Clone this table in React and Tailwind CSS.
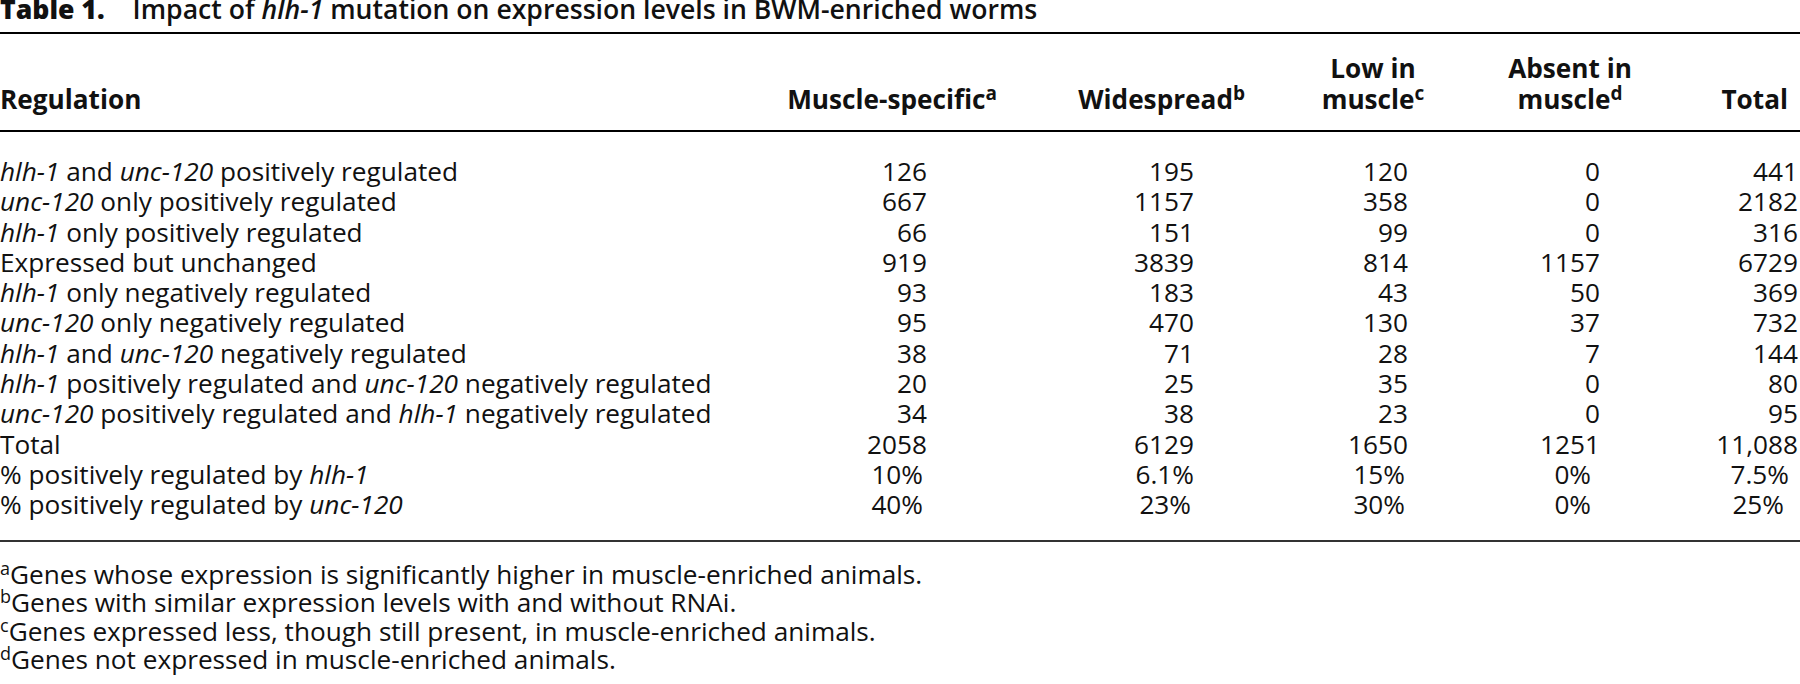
import React from 'react';

const grid = 'grid grid-cols-[760px_250px_260px_200px_200px_130px]';

// right padding per numeric column (integers)
const padInt = ['pr-[83px]', 'pr-[76px]', 'pr-[62px]', 'pr-[70px]', 'pr-[2px]'];
// percent rows sit a little left of the integers
const padPct = [
  ['pr-[87px]', 'pr-[76px]', 'pr-[65px]', 'pr-[79px]', 'pr-[11px]'],
  ['pr-[87px]', 'pr-[79px]', 'pr-[65px]', 'pr-[79px]', 'pr-[16px]'],
];

const rows = [
  { label: <><i>hlh-1</i> and <i>unc-120</i> positively regulated</>, vals: ['126', '195', '120', '0', '441'] },
  { label: <><i>unc-120</i> only positively regulated</>, vals: ['667', '1157', '358', '0', '2182'] },
  { label: <><i>hlh-1</i> only positively regulated</>, vals: ['66', '151', '99', '0', '316'] },
  { label: <>Expressed but unchanged</>, vals: ['919', '3839', '814', '1157', '6729'] },
  { label: <><i>hlh-1</i> only negatively regulated</>, vals: ['93', '183', '43', '50', '369'] },
  { label: <><i>unc-120</i> only negatively regulated</>, vals: ['95', '470', '130', '37', '732'] },
  { label: <><i>hlh-1</i> and <i>unc-120</i> negatively regulated</>, vals: ['38', '71', '28', '7', '144'] },
  { label: <><i>hlh-1</i> positively regulated and <i>unc-120</i> negatively regulated</>, vals: ['20', '25', '35', '0', '80'] },
  { label: <><i>unc-120</i> positively regulated and <i>hlh-1</i> negatively regulated</>, vals: ['34', '38', '23', '0', '95'] },
  { label: <>Total</>, vals: ['2058', '6129', '1650', '1251', '11,088'] },
];

const pctRows = [
  { label: <>% positively regulated by <i>hlh-1</i></>, vals: ['10%', '6.1%', '15%', '0%', '7.5%'] },
  { label: <>% positively regulated by <i>unc-120</i></>, vals: ['40%', '23%', '30%', '0%', '25%'] },
];

const notes = [
  ['a', 'Genes whose expression is significantly higher in muscle-enriched animals.'],
  ['b', 'Genes with similar expression levels with and without RNAi.'],
  ['c', 'Genes expressed less, though still present, in muscle-enriched animals.'],
  ['d', 'Genes not expressed in muscle-enriched animals.'],
];

const Sup = ({ children }) => <sup className="text-[19px]">{children}</sup>;

export default function App() {
  return (
    <div className="w-[1800px] h-[684px] overflow-hidden bg-white text-[#111] font-['Open_Sans',sans-serif] text-[26.2px]">
      {/* title */}
      <div className="leading-[19px] pb-[13px] border-b-2 border-black whitespace-nowrap text-[26.6px]">
        <span className="font-extrabold">Table 1.</span>
        <span className="font-semibold ml-[28px]">
          Impact of <i>hlh-1</i> mutation on expression levels in BWM-enriched worms
        </span>
      </div>

      {/* header */}
      <div className={`${grid} items-end font-bold leading-[31px] pt-[19px] pb-[15px] border-b-2 border-black`}>
        <div>Regulation</div>
        <div className="text-right pr-[13px]">Muscle-specific<Sup>a</Sup></div>
        <div className="text-right pr-[25px]">Widespread<Sup>b</Sup></div>
        <div className="text-center pl-[6px]">Low in<br />muscle<Sup>c</Sup></div>
        <div className="text-center">Absent in<br />muscle<Sup>d</Sup></div>
        <div className="text-right pr-[12px]">Total</div>
      </div>

      {/* body */}
      <div className="pt-[24px] pb-[20px] leading-[30.3px] border-b-2 border-[#333]">
        {rows.map((r, i) => (
          <div key={i} className={grid}>
            <div className="whitespace-nowrap">{r.label}</div>
            {r.vals.map((v, j) => (
              <div key={j} className={`text-right ${padInt[j]}`}>{v}</div>
            ))}
          </div>
        ))}
        {pctRows.map((r, i) => (
          <div key={'p' + i} className={grid}>
            <div className="whitespace-nowrap">{r.label}</div>
            {r.vals.map((v, j) => (
              <div key={j} className={`text-right ${padPct[i][j]}`}>{v}</div>
            ))}
          </div>
        ))}
      </div>

      {/* footnotes */}
      <div className="pt-[18px] leading-[28.6px] text-[26.2px]">
        {notes.map(([k, t]) => (
          <div key={k} className="whitespace-nowrap">
            <sup className="text-[18px]">{k}</sup>{t}
          </div>
        ))}
      </div>
    </div>
  );
}
